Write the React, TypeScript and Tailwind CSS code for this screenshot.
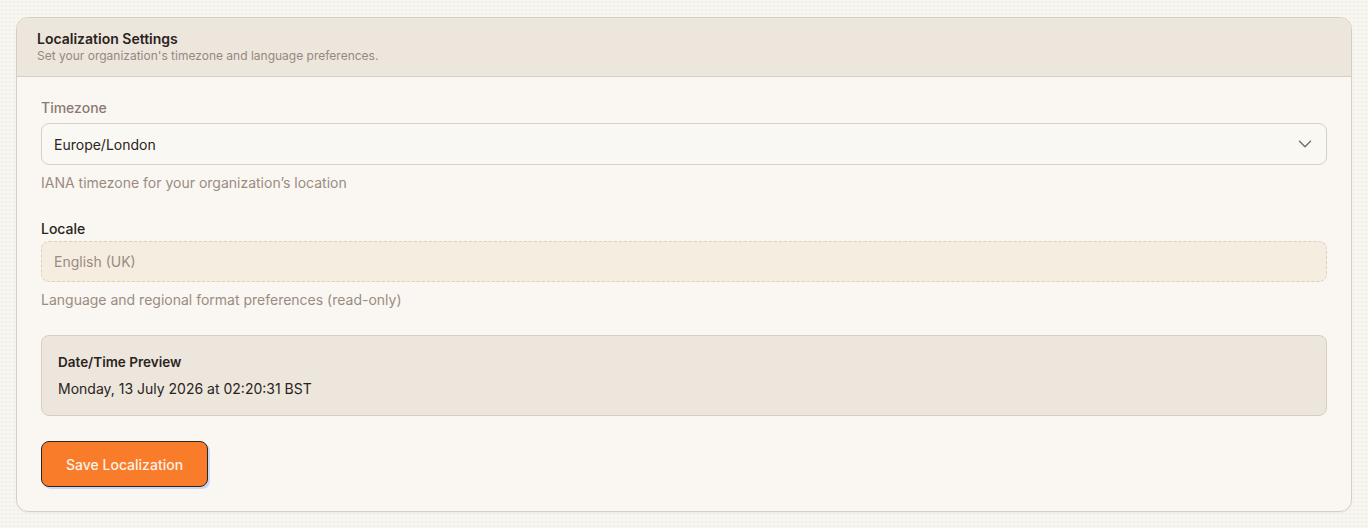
import { ChevronDown } from 'lucide-react';

export default function App() {
  return (
    <div className="min-h-[528px] bg-[#f8f6f1] bg-[radial-gradient(circle,#ebe5da_0.6px,transparent_0.8px)] bg-[size:4px_4px] px-4 pt-[17px] pb-4 font-['Inter',sans-serif] text-[#2a2320]">
      <div className="rounded-xl border border-[#d6cec2] bg-[#f9f7f2]/90 shadow-[0_1px_2px_rgba(0,0,0,0.05)]">
        <div className="h-[59px] rounded-t-xl border-b border-[#d6cec2] bg-[#ede6dc] px-5 pt-[11px]">
          <h2 className="text-[14px] leading-5 font-semibold">Localization Settings</h2>
          <p className="-mt-px text-[12px] leading-4 text-[#958980]">
            Set your organization's timezone and language preferences.
          </p>
        </div>

        <div className="px-6 pt-[21px] pb-6">
          <div>
            <label className="block text-[14px] leading-5 font-medium text-[#8a7a72]">Timezone</label>
            <button className="mt-[5px] flex h-[42px] w-full items-center justify-between rounded-lg border border-[#d9d0c4] bg-[#faf8f3] pr-[10px] pl-3 text-left text-[14px]">
              <span>Europe/London</span>
              <ChevronDown className="h-[22px] w-[22px] text-[#7d6e66]" strokeWidth={1.6} />
            </button>
            <p className="mt-[8px] text-[14px] leading-5 text-[#9a8b82]">IANA timezone for your organization’s location</p>
          </div>

          <div className="mt-[26px]">
            <label className="block text-[14px] leading-5 font-medium">Locale</label>
            <div className="mt-[2px] flex h-[41px] w-full items-center rounded-lg border border-dashed border-[#dccfbd] bg-[#f5ede0] px-3 text-[14px] text-[#9a8b82]">
              English (UK)
            </div>
            <p className="mt-[8px] text-[14px] leading-5 text-[#9a8b82]">Language and regional format preferences (read-only)</p>
          </div>

          <div className="mt-[25px] h-[81px] rounded-lg border border-[#d6cec2] bg-[#ede6dc] px-4 pt-[16px]">
            <h3 className="text-[13.5px] leading-5 font-semibold">Date/Time Preview</h3>
            <p className="mt-[7px] text-[14px] leading-5">Monday, 13 July 2026 at 02:20:31 BST</p>
          </div>

          <button className="mt-[25px] h-[46px] rounded-lg border border-[#2b2522] bg-[#f97c2a] px-6 text-[14px] font-medium text-[#fdf1e6] shadow-[2px_2px_0_#c9d8f0]">
            Save Localization
          </button>
        </div>
      </div>
    </div>
  );
}
